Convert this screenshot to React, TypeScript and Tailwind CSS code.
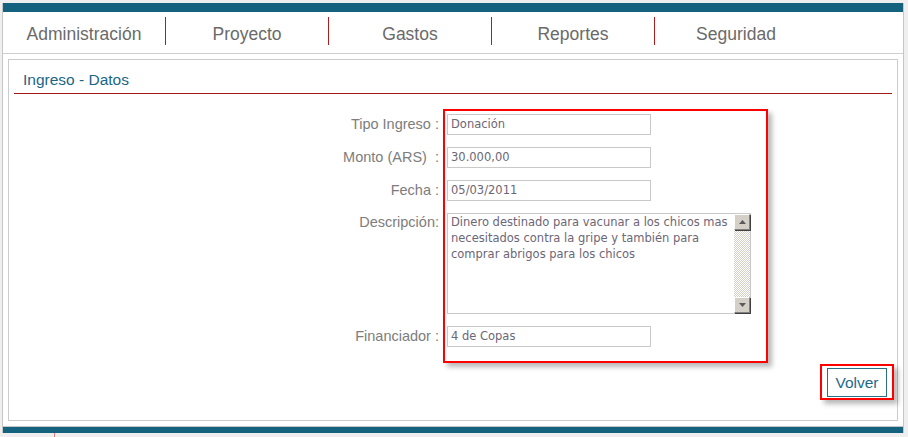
import React from 'react';

const navItems = ['Administración', 'Proyecto', 'Gastos', 'Reportes', 'Seguridad'];

const Field = ({ value }: { value: string }) => (
  <div className="flex h-[21px] w-[204px] items-center border border-[#c9c9c9] bg-white pl-[3px] font-['DejaVu_Sans',Tahoma,sans-serif] text-[11.5px] text-[#6c6676]">
    {value}
  </div>
);

const ScrollButton = ({ up }: { up?: boolean }) => (
  <div className="flex h-[16px] w-[16px] items-center justify-center border border-t-white border-l-white border-r-[#808080] border-b-[#808080] bg-[#d4d0c8] shadow-[1px_1px_0_#404040]">
    <svg width="7" height="4" viewBox="0 0 7 4">
      {up ? <path d="M3.5 0 L7 4 L0 4 Z" fill="#5a5a5a" /> : <path d="M0 0 L7 0 L3.5 4 Z" fill="#5a5a5a" />}
    </svg>
  </div>
);

const Label = ({ children, top }: { children: React.ReactNode; top?: boolean }) => (
  <div
    className={`whitespace-pre pr-[1px] text-right text-[14.5px] text-[#7d7d7d] ${top ? 'pt-[1px] leading-[16px]' : 'flex h-[21px] items-center justify-end'}`}
  >
    {children}
  </div>
);

export default function App() {
  return (
    <div className="h-[437px] w-[908px] overflow-hidden bg-[#efefef] font-['Liberation_Sans',Arial,sans-serif]">
      <div className="ml-[2px] mt-[3px] w-[902px] border-x border-[#c6c6c6] bg-white">
        <div className="h-[9px] bg-[#15627f]" />
        <nav className="flex h-[42px] border-b border-[#cfcfcf]">
          {navItems.map((item, i) => (
            <React.Fragment key={item}>
              <div className="flex w-[162px] items-center justify-center pt-[3px] text-[17.5px] text-[#6a6a6a]">{item}</div>
              {i < navItems.length - 1 && <div className="mt-[5px] h-[28px] w-px bg-[#b01c1c]" />}
            </React.Fragment>
          ))}
        </nav>

        <div className="px-[5px] pb-[5px] pt-[5px]">
          <div className="h-[362px] border border-[#cccccc] bg-white">
            <div className="mx-[5px] border-b border-[#a31818] pb-[4px] pl-[9px] pt-[11px] text-[15.5px] leading-[18px] text-[#1b6687]">
              Ingreso - Datos
            </div>

            <div className="relative pt-[20px]">
              <div className="grid grid-cols-[431px_auto] gap-x-[7px] gap-y-[12px]">
                <Label>Tipo Ingreso :</Label>
                <Field value="Donación" />
                <Label>Monto (ARS)  :</Label>
                <Field value="30.000,00" />
                <Label>Fecha :</Label>
                <Field value="05/03/2011" />
                <Label top>Descripción:</Label>
                <div className="flex h-[101px] w-[304px] border border-[#c9c9c9] bg-white">
                  <div className="flex-1 pl-[3px] font-['DejaVu_Sans',Tahoma,sans-serif] text-[11.5px] leading-[16px] text-[#6c6676]">
                    Dinero destinado para vacunar a los chicos mas necesitados contra la gripe y también para comprar abrigos para los chicos
                  </div>
                  <div className="flex w-[16px] flex-col justify-between bg-[repeating-conic-gradient(#d4d0c8_0_25%,#ffffff_0_50%)] bg-[length:2px_2px]">
                    <ScrollButton up />
                    <ScrollButton />
                  </div>
                </div>
                <Label>Financiador :</Label>
                <Field value="4 de Copas" />
              </div>

              <div className="pointer-events-none absolute left-[434px] top-[15px] h-[254px] w-[325px] border-2 border-[#ff0000] shadow-[4px_4px_5px_rgba(0,0,0,0.28)]" />
            </div>

            <div className="mt-[17px] flex justify-end pr-[3px]">
              <div className="border-2 border-[#ff0000] px-[5px] pb-[1px] pt-[2px] shadow-[4px_4px_5px_rgba(0,0,0,0.28)]">
                <button className="flex h-[29px] w-[60px] items-center justify-center border border-[#2a6f85] bg-white text-[15.5px] text-[#1e6a87]">
                  Volver
                </button>
              </div>
            </div>
          </div>
        </div>
        <div className="h-px bg-[#c6c6c6]" />
        <div className="h-[6px] bg-[#15627f]" />
      </div>
      <div className="ml-[54px] h-[4px] w-px bg-[#e08080]" />
    </div>
  );
}
